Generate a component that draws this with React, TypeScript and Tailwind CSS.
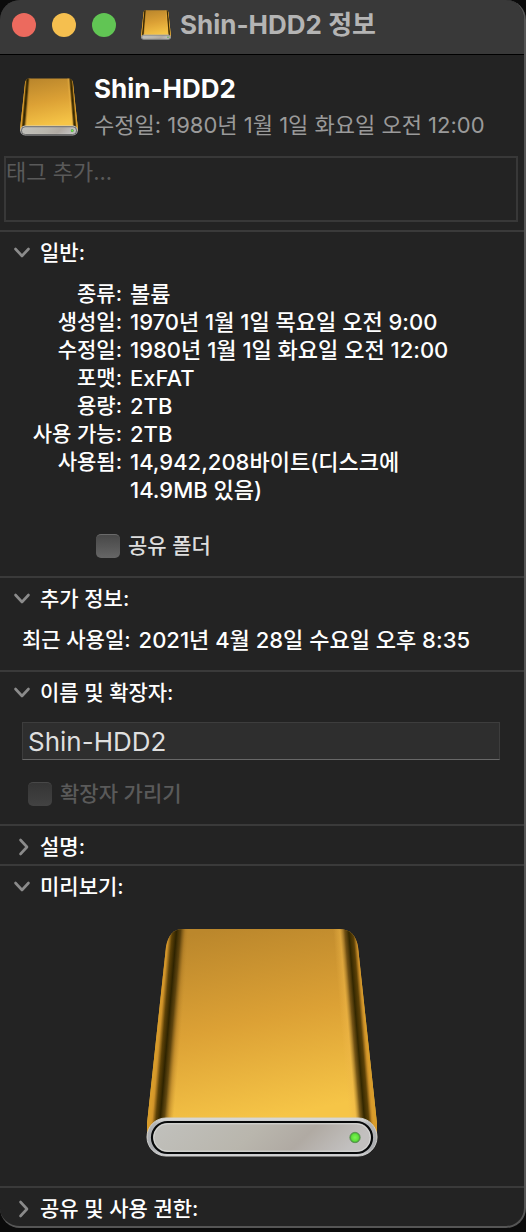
import { useId, useState, type ReactNode } from "react";
import clsx from "clsx";

function DriveIcon({ className }: { className?: string }) {
  const id = useId();
  const ref = (name: string) => `url(#${id}${name})`;
  const body =
    "M36 2 H193 C204 2 210 8 212 20 L231 197 L231 212 H1 L1 197 L20 20 C22 8 28 2 36 2 Z";

  return (
    <svg viewBox="0 0 232 232" className={className} aria-hidden="true">
      <defs>
        <linearGradient id={`${id}gold`} x1="80" y1="0" x2="120" y2="192" gradientUnits="userSpaceOnUse">
          <stop offset="0" stopColor="#bb872c" />
          <stop offset="0.5" stopColor="#dca135" />
          <stop offset="1" stopColor="#f6c547" />
        </linearGradient>
        <linearGradient id={`${id}left`} x1="18" y1="36" x2="41" y2="38" gradientUnits="userSpaceOnUse">
          <stop offset="0" stopColor="#d99c2a" />
          <stop offset="0.08" stopColor="#d0932a" />
          <stop offset="0.24" stopColor="#5c4107" />
          <stop offset="0.42" stopColor="#2e2300" />
          <stop offset="0.6" stopColor="#4a3508" stopOpacity="0.85" />
          <stop offset="0.8" stopColor="#a87622" stopOpacity="0.5" />
          <stop offset="1" stopColor="#c58f2d" stopOpacity="0" />
        </linearGradient>
        <linearGradient id={`${id}right`} x1="214" y1="36" x2="190" y2="38" gradientUnits="userSpaceOnUse">
          <stop offset="0" stopColor="#d99c2a" />
          <stop offset="0.06" stopColor="#c58a26" />
          <stop offset="0.18" stopColor="#5c4107" />
          <stop offset="0.36" stopColor="#332700" />
          <stop offset="0.52" stopColor="#614510" stopOpacity="0.85" />
          <stop offset="0.72" stopColor="#efb748" stopOpacity="0.5" />
          <stop offset="1" stopColor="#f2b94a" stopOpacity="0" />
        </linearGradient>
        <linearGradient id={`${id}rim`} x1="0" y1="0" x2="0" y2="1">
          <stop offset="0" stopColor="#e2e2df" />
          <stop offset="0.15" stopColor="#b3b5b7" />
          <stop offset="0.8" stopColor="#a9abae" />
          <stop offset="1" stopColor="#d2d3d6" />
        </linearGradient>
        <linearGradient id={`${id}face`} x1="0" y1="0" x2="1" y2="0.15">
          <stop offset="0" stopColor="#c1c1bd" />
          <stop offset="0.5" stopColor="#b9b6ad" />
          <stop offset="0.75" stopColor="#b0aaa3" />
          <stop offset="1" stopColor="#c2c0bf" />
        </linearGradient>
        <radialGradient id={`${id}led`}>
          <stop offset="0" stopColor="#7cf553" />
          <stop offset="0.65" stopColor="#5fe03c" />
          <stop offset="1" stopColor="#3f9a35" />
        </radialGradient>
      </defs>
      <path d={body} fill={ref("gold")} />
      <path d={body} fill={ref("left")} />
      <path d={body} fill={ref("right")} />
      <rect x="1" y="191" width="230" height="38" rx="19" ry="19" fill={ref("rim")} stroke="#d0d0ce" strokeWidth="1" />
      <rect x="6" y="195" width="220" height="31" rx="15.5" fill={ref("face")} stroke="#07090a" strokeWidth="2.2" />
      <rect x="7.8" y="196.8" width="216.4" height="27.4" rx="13.7" fill="none" stroke="#d6d7d5" strokeWidth="1" />
      <circle cx="209" cy="210.5" r="5.2" fill={ref("led")} stroke="#5b8a50" strokeWidth="0.8" />
    </svg>
  );
}

function Chevron({ open }: { open: boolean }) {
  return (
    <svg
      viewBox="0 0 18 18"
      className="size-[18px] shrink-0 fill-none stroke-[#8b8b8b]"
      strokeWidth="2.6"
      strokeLinecap="round"
      strokeLinejoin="round"
      aria-hidden="true"
    >
      {open ? <path d="M2.500 5 L9 12 L15.500 5" /> : <path d="M7.500 2 L14 9 L7.500 16" />}
    </svg>
  );
}

interface SectionProps {
  title: string;
  defaultOpen?: boolean;
  children?: ReactNode;
}

function Section({ title, defaultOpen = false, children }: SectionProps) {
  const [open, setOpen] = useState(defaultOpen);

  return (
    <section className="border-t-2 border-[#3a3a3a]">
      <h2>
        <button
          type="button"
          aria-expanded={open}
          onClick={() => setOpen(!open)}
          className="flex h-[38px] w-full items-center gap-[9px] pt-[3px] pl-[13px] text-left"
        >
          <Chevron open={open} />
          {title}
        </button>
      </h2>
      {open && children}
    </section>
  );
}

interface CheckProps {
  label: string;
  disabled?: boolean;
}

function Check({ label, disabled }: CheckProps) {
  return (
    <label className={clsx("flex h-6 w-fit items-center gap-2", disabled ? "text-[#5a5a5a]" : "text-[#dedede]")}>
      <input
        type="checkbox"
        disabled={disabled}
        className={clsx(
          "size-6 appearance-none rounded-[5px] border-t bg-linear-to-b checked:bg-[#2f6fe0]",
          disabled
            ? "border-[#484848] from-[#353535] to-[#424242]"
            : "border-[#6a6a6a] from-[#484848] to-[#666666]"
        )}
      />
      {label}
    </label>
  );
}

const general = [
  ["종류", "볼륨"],
  ["생성일", "1970년 1월 1일 목요일 오전 9:00"],
  ["수정일", "1980년 1월 1일 화요일 오전 12:00"],
  ["포맷", "ExFAT"],
  ["용량", "2TB"],
  ["사용 가능", "2TB"],
  ["사용됨", "14,942,208바이트(디스크에 14.9MB 있음)"],
];

const lights = [
  { label: "닫기", color: "bg-[#ec6a5e]" },
  { label: "최소화", color: "bg-[#f5bf4f]" },
  { label: "확대", color: "bg-[#61c554]" },
];

export default function App() {
  const [name, setName] = useState("Shin-HDD2");

  return (
    <div className="min-h-screen bg-[#0b0b0b] pb-1 font-[Inter,'Noto_Sans_CJK_KR',sans-serif]">
      <main className="overflow-hidden rounded-[20px] border-r-2 border-b-2 border-[#555555] bg-[#232323] text-[21px] leading-7 font-medium break-keep text-white">
        <header className="flex h-[55px] items-center border-b border-black bg-[#393939] pb-1 pl-3">
          <div className="flex gap-4">
            {lights.map((l) => (
              <button key={l.label} type="button" aria-label={l.label} className={clsx("size-6 rounded-full", l.color)} />
            ))}
          </div>
          <DriveIcon className="ml-[25px] size-[30px]" />
          <h1 className="ml-[9px] text-[26px] font-bold text-[#b4b4b4]">{name} 정보</h1>
        </header>

        <div className="flex items-center gap-4 px-5 pt-5 pb-[17px]">
          <DriveIcon className="size-[58px]" />
          <div className="flex flex-col gap-2">
            <p className="text-[26px] font-bold">{name}</p>
            <p className="text-[22px] font-normal text-[#9a9a9a]">수정일: 1980년 1월 1일 화요일 오전 12:00</p>
          </div>
        </div>

        <div className="pr-1.5 pb-2 pl-1">
          <textarea
            aria-label="태그"
            placeholder="태그 추가..."
            className="block h-[66px] w-full resize-none border-2 border-[#383838] bg-transparent text-[22px] font-normal outline-none placeholder:text-[#5a5a5a]"
          />
        </div>

        <Section title="일반:" defaultOpen>
          <dl className="pt-[10px]">
            {general.map(([label, value]) => (
              <div key={label} className="flex gap-2">
                <dt className="w-[122px] shrink-0 text-right">{label}:</dt>
                <dd className="max-w-[330px] text-[22px]">{value}</dd>
              </div>
            ))}
          </dl>
          <div className="pt-[30px] pb-[18px] pl-24">
            <Check label="공유 폴더" />
          </div>
        </Section>

        <Section title="추가 정보:" defaultOpen>
          <dl className="flex gap-2 px-[22px] pt-[10px] pb-4">
            <dt>최근 사용일:</dt>
            <dd className="text-[22px]">2021년 4월 28일 수요일 오후 8:35</dd>
          </dl>
        </Section>

        <Section title="이름 및 확장자:" defaultOpen>
          <div className="pt-3 pr-6 pl-[22px]">
            <input
              type="text"
              aria-label="이름"
              value={name}
              onChange={(e) => setName(e.target.value)}
              className="block h-[38px] w-full border border-[#3d3d3d] border-b-[#686868] bg-[#2e2e2e] px-[5px] text-[26px] font-normal text-[#dfdfdf] outline-none"
            />
          </div>
          <div className="pt-[22px] pb-[18px] pl-7">
            <Check label="확장자 가리기" disabled />
          </div>
        </Section>

        <Section title="설명:" />

        <Section title="미리보기:" defaultOpen>
          <div className="flex justify-center pt-[23px] pb-[27px]">
            <DriveIcon className="size-[232px]" />
          </div>
        </Section>

        <Section title="공유 및 사용 권한:" />
      </main>
    </div>
  );
}
